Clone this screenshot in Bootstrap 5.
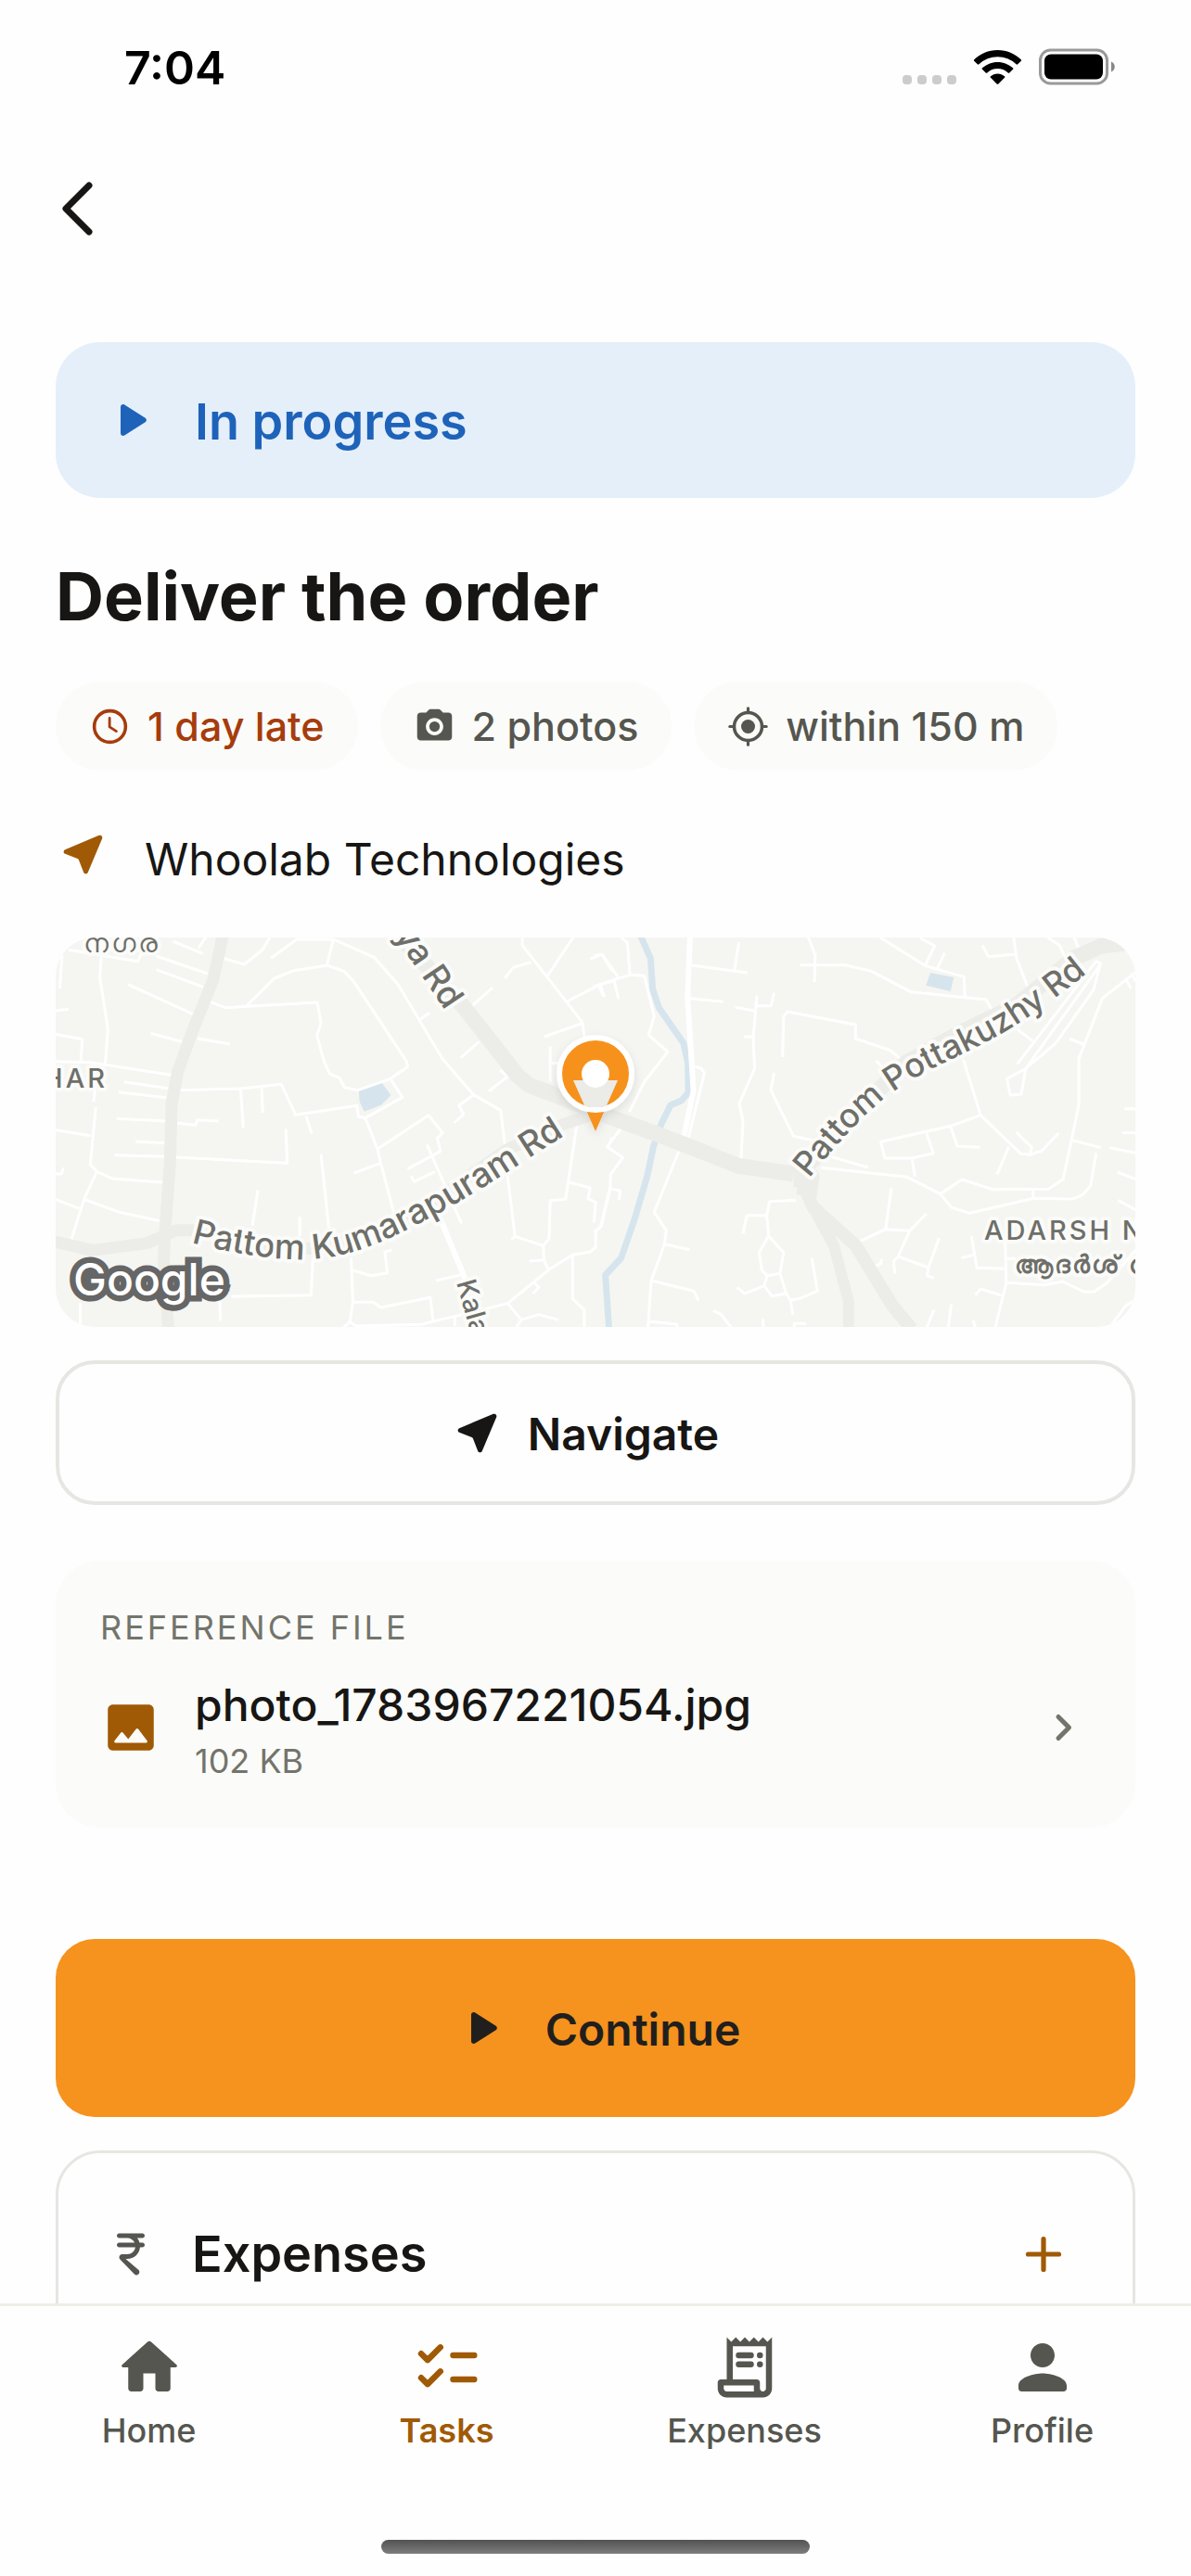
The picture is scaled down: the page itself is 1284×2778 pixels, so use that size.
<!DOCTYPE html>
<html lang="en">
<head>
<meta charset="utf-8">
<meta name="viewport" content="width=device-width, initial-scale=1">
<title>Deliver the order</title>
<link href="https://cdn.jsdelivr.net/npm/bootstrap@5.3.0/dist/css/bootstrap.min.css" rel="stylesheet">
<style>
:root{--ink:#171614;--soft:#55564f;--muted:#73746b;--amber:#a05a05;--orange:#f6921e;--line:#e6e7e2;--panel:#fbfbf9}
body{font-family:Inter,"Noto Sans",sans-serif;color:var(--ink);background:#fefefe}
svg{display:block;flex-shrink:0}
.i45{width:45px;height:45px}.i60{width:60px;height:60px}.i66{width:66px;height:66px}.i78{width:78px;height:78px}
.gap-18{gap:18px}.gap-24{gap:24px}.gap-36{gap:36px}
.status-bar{height:144px;padding:0 82px 0 134px}
.clock{font-size:50px;line-height:60px;padding-top:2px;color:#000}
.app-bar{height:162px;padding:0 46px}
.back-btn{padding:0;color:var(--ink)}
.scroll-area{min-height:0;overflow-y:auto;scrollbar-width:none;padding:63px 60px 0}
.scroll-area::-webkit-scrollbar{display:none}
.icon-label{padding-top:4px}
.banner{height:168px;padding:0 48px;border-radius:48px;background:#e4effa;color:#1e63b9;font-size:54px;line-height:72px}
.page-title{font-size:72px;line-height:90px;margin:61px 0 47px}
.chip{height:96px;padding:0 36px;border-radius:48px;background:var(--panel);color:var(--soft);font-size:43px;line-height:60px}
.chip-late{color:#a63c0c}
.place{margin:60px 0 48px;font-size:48px;line-height:72px}
.text-amber{color:var(--amber)}
.map-box{height:420px;border-radius:42px;background:#f5f6f2}
.map-box text{font-family:Inter,"Noto Sans",sans-serif;font-weight:500;fill:#6e6f69;stroke:#fbfbf9;stroke-width:8px;stroke-linejoin:round;paint-order:stroke}
.map-box path{vector-effect:non-scaling-stroke;fill:none;stroke-linejoin:round}
.lanes{stroke:#fff;stroke-width:3px}
.streets{stroke:#fff;stroke-width:6px}
.avenues{stroke:#ecede9}
.river{stroke:#d6e5ed;stroke-width:7px}
.map-box path.pond{fill:#d6e5ed}
.road-name{font-size:37px}
.road-name-sm{font-size:36px}
.area-name{font-size:29px;letter-spacing:3px}
.map-box text.local-name{font-size:27px;font-weight:600;letter-spacing:2px}
.map-box text.brand{font-size:48px;font-weight:500;fill:#fff;stroke:#666;stroke-width:13px;stroke-linejoin:miter}
.btn-nav{height:156px;margin-top:36px;padding:0 72px 0 48px;border:4px solid var(--line);border-radius:42px;font-size:48px;line-height:60px;color:var(--ink)}
.file-card{margin-top:60px;padding:48px;border-radius:48px;background:var(--panel)}
.eyebrow{font-size:36px;line-height:48px;letter-spacing:3px;margin-bottom:24px;color:var(--muted)}
.file-link{color:var(--ink)}
.file-name{font-size:48px;line-height:72px}
.file-size{font-size:36px;line-height:48px;color:var(--muted)}
.btn-go{height:192px;margin-top:120px;border:0;border-radius:42px;background:var(--orange);color:#211f1d;font-size:48px;line-height:60px}
.expense-card{margin-top:36px;padding:76px 63px 76px 48px;border:3px solid var(--line);border-radius:48px}
.expense-title{font-size:54px;line-height:66px}
.tab-bar{border-top:3px solid #efefea;padding-top:27px}
.tab-link{color:var(--soft);font-size:36px;line-height:46px;gap:6px}
.tab-link.active{color:var(--amber)}
.home-bar{width:36%;height:15px;margin:95px auto 24px;border-radius:8px;background:linear-gradient(#525252,#7d7d7d)}
</style>
</head>
<body>
<div class="d-flex flex-column vh-100">
  <header>
    <div class="status-bar d-flex align-items-center justify-content-between">
      <span class="clock fw-semibold">7:04</span>
      <svg width="230" height="40" viewBox="0 0 230 40" role="img" aria-label="Signal, Wi-Fi, battery">
        <g fill="#ccc"><rect x="1" y="29" width="10" height="10" rx="4"/><rect x="17" y="29" width="10" height="10" rx="4"/><rect x="33" y="29" width="10" height="10" rx="4"/><rect x="49" y="29" width="10" height="10" rx="4"/></g>
        <path d="M103.500 2C93.500 2 85 6 78.200 12.200Q77.500 13 78.200 13.800L81.800 17.300Q82.600 18 83.400 17.300A29 29 0 0 1 123.600 17.300Q124.400 18 125.200 17.300L128.800 13.800Q129.500 13 128.800 12.200C122 6 113.500 2 103.500 2ZM103.500 15C97 15 91.500 17.500 87 21.300Q86.200 22 87 22.800L90.700 26.400Q91.500 27 92.300 26.400A16.500 16.500 0 0 1 114.700 26.400Q115.500 27 116.300 26.400L120 22.800Q120.800 22 120 21.300C115.500 17.500 110 15 103.500 15ZM103.500 27.500C100.500 27.500 98 28.600 96 30.300Q95.200 31 96 31.800L102.600 38.400Q103.500 39.200 104.400 38.400L111 31.800Q111.800 31 111 30.300C109 28.600 106.500 27.500 103.500 27.500Z"/>
        <rect x="149.500" y="2" width="72" height="36" rx="11" fill="none" stroke="#999" stroke-width="3"/>
        <rect x="154" y="6.500" width="63" height="27" rx="7"/>
        <path d="M226 14.500c5 2 5 9 0 11z" fill="#888"/>
      </svg>
    </div>
    <div class="app-bar d-flex align-items-center">
      <button type="button" class="btn back-btn" aria-label="Back">
        <svg width="72" height="72" viewBox="0 0 72 72" fill="none" stroke="currentColor" stroke-width="7" stroke-linecap="round" stroke-linejoin="round"><path d="M49 11 24 36l25 25"/></svg>
      </button>
    </div>
  </header>

  <main class="scroll-area flex-grow-1">
    <div class="banner d-flex align-items-center gap-36 fw-semibold">
      <svg class="i66" viewBox="0 0 24 24" fill="currentColor"><path d="M8 6.820v10.360c0 .79.870 1.270 1.540.84l8.140-5.180c.62-.39.62-1.290 0-1.690L9.540 5.980C8.870 5.550 8 6.030 8 6.820z"/></svg>
      <span class="icon-label">In progress</span>
    </div>

    <h1 class="page-title fw-bold">Deliver the order</h1>

    <div class="d-flex flex-wrap gap-24">
      <span class="chip chip-late d-flex align-items-center gap-18 fw-medium">
        <svg class="i45" viewBox="0 0 24 24" fill="none" stroke="currentColor"><circle cx="12" cy="12" r="9" stroke-width="1.900"/><path d="M11.800 7.200v5l3.900 2.500" stroke-width="1.500" stroke-linecap="round" stroke-linejoin="round"/></svg>
        <span>1 day late</span>
      </span>
      <span class="chip d-flex align-items-center gap-18 fw-medium">
        <svg class="i45" viewBox="0 0 24 24" fill="currentColor"><circle cx="12" cy="12" r="3"/><path d="M9.880 2c-.56 0-1.100.24-1.480.65L7.170 4H4c-1.100 0-2 .9-2 2v12c0 1.100.9 2 2 2h16c1.100 0 2-.9 2-2V6c0-1.100-.9-2-2-2h-3.170l-1.240-1.350c-.37-.41-.91-.65-1.470-.65H9.880zM12 17c-2.760 0-5-2.240-5-5s2.240-5 5-5 5 2.240 5 5-2.240 5-5 5z"/></svg>
        <span>2 photos</span>
      </span>
      <span class="chip d-flex align-items-center gap-18 fw-medium">
        <svg class="i45" viewBox="0 0 24 24"><circle cx="12" cy="12" r="4" fill="currentColor"/><g fill="none" stroke="currentColor" stroke-linecap="round"><circle cx="12" cy="12" r="8" stroke-width="1.900"/><path d="M12 1.500v2.500M12 20v2.500M1.500 12H4M20 12h2.500" stroke-width="1.700"/></g></svg>
        <span>within 150 m</span>
      </span>
    </div>

    <div class="place d-flex align-items-start gap-36">
      <svg class="i60 text-amber" viewBox="0 0 24 24" fill="currentColor"><path d="M18.750 3.940L4.070 10.080c-.83.35-.81 1.530.02 1.850L9.430 14c.26.1.47.31.57.57l2.060 5.330c.32.84 1.510.86 1.860.03l6.150-14.670c.33-.83-.5-1.660-1.320-1.320z"/></svg>
      <span>Whoolab Technologies</span>
    </div>

    <div class="map-box overflow-hidden">
      <svg width="100%" height="100%" viewBox="0 0 1164 420" preserveAspectRatio="xMidYMid slice" role="img" aria-label="Map of the delivery place">
        <defs>
          <path id="kumarapuram" d="M146 329C182 339 232 348 272 347C325 345 368 321 412 298C455 275 500 244 570 200"/>
          <path id="pottakuzhy" d="M812 260C840 226 864 197 897 171C927 148 957 136 987 121C1042 94 1072 71 1137 18"/>
          <filter id="pinShade" x="-50%" y="-50%" width="200%" height="200%"><feDropShadow dx="0" dy="4" stdDeviation="5" flood-opacity=".1"/></filter>
        </defs>
        <!-- west half -->
        <g transform="translate(-20 -21) scale(.39541 .33333)">
          <path class="pond" d="M877 557L940 534L965 573L938 605L892 626L879 594Z"/>
          <g class="lanes">
            <path d="M85 103L275 140L290 100M68 120L62 228M175 125L171 190L193 360L186 470M50 300L86 295M50 376L123 392L119 466M50 464L145 467L365 508M237 530L358 551M222 563L352 581M158 555L154 595M160 612L145 798L163 820L205 843L345 856M50 686L147 704M217 649L350 657M268 723L350 728M211 767L350 772M72 808L66 828L50 828M163 820L128 910L92 1045M50 910L115 940M128 910L225 952L335 980"/>
            <path d="M370 75L452 115M460 62L440 97M325 123L465 180M325 167L453 223M248 215L427 312M310 373L395 400M438 390L526 408M507 130L565 150L613 105L635 62M638 130L708 69H808L920 128L985 217L1105 455L1190 572L1264 622L1276 740"/>
            <path d="M808 69L790 153L700 170L647 195L568 288M790 153L838 173L863 205L1008 465L1010 482L963 520L875 557L838 548L824 517L798 504L783 466L763 380L774 340L764 273L513 290L473 272M963 520L996 580L895 647L876 642L872 607L705 637L666 538L555 552L388 557M555 552L562 678M612 546L615 630M376 663L432 670L437 653L495 657M678 682L682 793L378 774M733 640L749 698M774 764L796 1010M602 880L587 995M716 965V1030M895 647L928 748L937 793L974 960M928 748L1067 638L1106 695L1091 712L1100 754L1010 812M937 793L864 825M1020 835L1028 853L1085 820M1063 733L1157 988"/>
            <path d="M1276 770L1303 1030L1380 1060L1396 1037L1399 914L1441 910L1472 665M1303 1030L1293 1040M1380 1060L1382 1108L1395 1138M1342 1110L1382 1106M856 1100L861 1240L853 1307L835 1325M853 1307L870 1320L1047 1315L1283 1247L1395 1138L1460 1090L1508 1080L1523 1065V1015L1537 997L1562 870M861 1140L910 1157L955 1148L948 1080L967 1075M1087 1173L1165 1152M863 1243H916L937 1260L1072 1228L1080 1305M1139 1290V1320M1283 1247L1320 1300L1307 1325M1320 1300L1367 1283L1422 1300M1460 1090V1232L1492 1268V1325M1355 1180L1368 1195L1352 1215M530 1224L747 1220L752 1100M498 1240L500 1303M118 1245V1318"/>
            <path d="M1042 330L1070 306M1180 290L1242 225M1155 452L1205 400M1232 560L1283 513L1262 492M1190 572L1150 607L1163 635L1137 663M1323 62V88L1487 338L1492 385M1347 143L1298 160L1275 195M1390 190L1462 62M1445 270L1535 215L1568 205M1535 215L1547 255M1508 132L1540 118L1568 170M1487 340L1383 384M1399 415V530M1399 470H1425M1451 855L1508 873L1502 908L1523 920L1518 985M1568 710L1556 742"/>
          </g>
          <path class="streets" d="M1100 975L1168 1170"/>
          <g class="avenues">
            <path stroke-width="13" d="M507 55L480 200L422 370L383 500L367 600L362 800L352 960L345 1100L350 1200L358 1330"/>
            <path stroke-width="13" d="M40 1045L150 1075L300 1052L380 1010L430 1010L560 1045L740 1070L900 1030L1100 900L1280 750L1440 665L1530 630"/>
            <path stroke-width="17" d="M985 55L1165 290L1310 510L1340 540L1440 585L1530 630"/>
          </g>
        </g>
        <!-- east half -->
        <g transform="translate(580 -21) scale(.39541 .33333)">
          <path class="pond" d="M918 177L982 192L973 237L906 218Z"/>
          <path class="river" d="M127 55L155 130L161 230L178 290L245 405L257 470L258 565L240 590L210 605L185 665L163 740L145 840L110 980L75 1100L32 1155L42 1330"/>
          <g class="lanes">
            <path d="M75 62L92 80L99 184M0 222L55 200L99 184L138 187L165 318L150 378L202 433L138 530L97 628M12 215L28 255M55 200L68 262M0 122L24 118L66 190M78 675L37 740L79 775L46 830L45 875L73 883L69 912M45 875L20 1000L0 1015M232 755L165 952L198 1010L193 1055L157 1173L148 1325M193 1055L262 1073M157 1173L273 1207L286 1238M148 1305L227 1314V1325M268 153L419 177M384 168L396 78M263 260L353 271M386 289L437 300M445 252L435 390L439 487L397 600L407 655L402 780M445 284H484L492 242M410 384H435M275 480L293 486L302 502L258 712"/>
            <path d="M515 450L518 320L528 303L714 345V390L808 428L838 457M492 500L483 557L545 706L600 720M563 152H685L757 172L865 239L1070 264L1092 310M585 62L604 120L602 207M780 62L905 155L1010 190L1012 255M890 65L930 90L905 150M957 113L937 163M1060 88L1076 125L1150 117M1145 62L1153 130L1184 225M1237 62L1270 88L1285 125M1310 62L1322 98M1008 458L1055 638L973 673L783 724L794 777H868L926 761L908 697M868 777L876 836M973 673L991 738L1053 742M1055 638L1165 763L1190 766L1222 753L1268 695M1152 693L1194 741L1190 766M1132 740L1100 829"/>
            <path d="M770 462L785 480M640 770L748 807M620 808L855 838L945 893L1004 846L1088 878L1240 877L1280 845L1303 718L1323 605V455L1387 260L1478 175M945 893L975 936L1025 955L1200 907L1307 909L1334 895L1355 867L1370 760M1198 880V907M1303 718L1383 743M1407 743L1478 760M1297 390L1334 408M1155 472L1370 140L1382 147L1363 232L1260 405L1178 487L1127 520L1136 573L1166 570L1178 487L1382 150M1155 360L1197 398M1450 195L1465 227M1478 617H1447M1478 695H1441M1428 822L1478 845M1430 913L1478 945M1465 180L1478 205"/>
            <path d="M552 913L480 917L472 962L477 1028L518 1082L508 1150L525 1215L537 1237L543 1284M472 962H418L407 1022M477 1028L451 1082L459 1140L473 1157L508 1150M473 1157L465 1190L412 1215L391 1195M465 1190L486 1223L525 1215M595 1100L610 1207L565 1230L537 1237M812 872L796 1007L727 1045M796 1007L862 1012L907 956M862 1012L830 1095L913 1131L942 1035M830 1095L818 1110L821 1150M913 1131L909 1157L928 1165M785 1103L783 1118L765 1128M1030 1030L1045 1132L1122 1135M1003 1100L1035 1090M1122 1045L1125 1180L1095 1325M1125 1180L1230 1187L1278 1176L1337 1209H1365L1400 1180L1478 1075M1125 1102H1150M1041 1220L1055 1200L1115 1222M326 1270L347 1282L375 1325M461 1297L463 1325M547 1325V1312H580M975 1250L967 1325M928 1268L908 1325M1035 1302L1041 1325M1478 1235L1450 1255L1410 1320"/>
          </g>
          <path class="streets" d="M263 55L256 260L268 480L272 560L245 712"/>
          <g class="avenues">
            <path stroke-width="17" d="M-77 585L13 630L180 702L395 802L545 828"/>
            <path stroke-width="17" d="M550 830L600 780L720 625L850 470L1000 370L1150 285L1310 130L1385 90L1490 75"/>
            <path stroke-width="22" d="M545 838L588 838L580 900"/>
            <path stroke-width="12" d="M565 850L600 940L655 1060L695 1240V1330"/>
            <path stroke-width="14" d="M575 870L598 935L715 1060L815 1255L868 1330"/>
          </g>
        </g>
        <text class="area-name" x="30" y="16">നഗര</text>
        <text class="area-name" x="56" y="162" text-anchor="end">HAR</text>
        <text class="area-name" x="1001" y="326">ADARSH N</text>
        <text class="area-name local-name" x="1034" y="362">ആദർശ് ന</text>
        <text class="road-name" transform="translate(420 79) rotate(56)" text-anchor="end">ya Rd</text>
        <text class="road-name"><textPath href="#kumarapuram">Pattom Kumarapuram Rd</textPath></text>
        <text class="road-name-sm"><textPath href="#pottakuzhy">Pattom Pottakuzhy Rd</textPath></text>
        <text font-size="29" transform="translate(432 372) rotate(74)">Kala</text>
        <text class="brand" x="19" y="386">Google</text>
        <g filter="url(#pinShade)">
          <polygon points="558,154 606,154 582,209" fill="#f6921e"/>
          <circle cx="582" cy="147" r="39" fill="#f6921e" stroke="#fff" stroke-width="6"/>
        </g>
        <polygon points="558,154 606,154 594,181 588,183 576,183 570,181" fill="#ebebe8"/>
        <circle cx="582" cy="147" r="15" fill="#fff"/>
      </svg>
    </div>

    <button type="button" class="btn btn-nav w-100 d-flex align-items-center justify-content-center gap-24 fw-semibold">
      <svg class="i60" viewBox="0 0 24 24" fill="currentColor"><path d="M18.750 3.940L4.070 10.080c-.83.35-.81 1.530.02 1.850L9.430 14c.26.1.47.31.57.57l2.060 5.330c.32.84 1.510.86 1.860.03l6.150-14.670c.33-.83-.5-1.660-1.320-1.320z"/></svg>
      <span class="icon-label">Navigate</span>
    </button>

    <section class="file-card">
      <div class="eyebrow text-uppercase">Reference file</div>
      <a href="#" class="file-link d-flex align-items-center gap-36 text-decoration-none">
        <svg class="i66 text-amber" viewBox="0 0 24 24" fill="currentColor"><path d="M21 19V5c0-1.100-.9-2-2-2H5c-1.100 0-2 .9-2 2v14c0 1.100.9 2 2 2h14c1.100 0 2-.9 2-2zM8.900 13.980l2.100 2.530 3.100-3.990c.2-.26.6-.26.8.01l3.510 4.680c.25.33.01.8-.4.8H6.020c-.42 0-.65-.48-.39-.81L8.120 14c.19-.26.57-.27.78-.02z"/></svg>
        <span class="flex-grow-1 d-flex flex-column">
          <span class="file-name fw-medium">photo_1783967221054.jpg</span>
          <span class="file-size">102 KB</span>
        </span>
        <svg class="i60" viewBox="0 0 24 24" fill="none" stroke="#73746b" stroke-width="2" stroke-linecap="round" stroke-linejoin="round"><path d="M10 7.400l4.600 4.600-4.600 4.600"/></svg>
      </a>
    </section>

    <button type="button" class="btn btn-go w-100 d-flex align-items-center justify-content-center gap-36 fw-semibold">
      <svg class="i66" viewBox="0 0 24 24" fill="currentColor"><path d="M8 6.820v10.360c0 .79.870 1.270 1.540.84l8.140-5.180c.62-.39.62-1.290 0-1.690L9.540 5.980C8.870 5.550 8 6.030 8 6.820z"/></svg>
      <span class="icon-label">Continue</span>
    </button>

    <section class="expense-card d-flex align-items-center gap-36">
      <svg class="i60" viewBox="0 0 24 24" fill="#55564f"><path d="M17 5c.55 0 1-.45 1-1s-.45-1-1-1H7c-.55 0-1 .45-1 1s.45 1 1 1h3.500c1.400 0 2.600.82 3.160 2H7c-.55 0-1 .45-1 1s.45 1 1 1h6.960c-.24 1.700-1.700 3-3.460 3H8.270C7.570 12 7 12.570 7 13.270c0 .33.13.64.35.88l6.200 6.450c.24.25.57.4.92.4 1.120 0 1.700-1.350.920-2.160L9.770 14h.73c2.870 0 5.230-2.200 5.480-5H17c.55 0 1-.45 1-1s-.45-1-1-1h-1.210c-.21-.74-.57-1.420-1.050-2z"/></svg>
      <h2 class="expense-title fw-semibold m-0 flex-grow-1">Expenses</h2>
      <button type="button" class="btn p-0 border-0 text-amber" aria-label="Add expense">
        <svg class="i66" viewBox="0 0 24 24" fill="none" stroke="currentColor" stroke-width="1.900" stroke-linecap="round"><path d="M12 6v12M6 12h12"/></svg>
      </button>
    </section>
  </main>

  <footer>
    <nav class="tab-bar row g-0" aria-label="Main">
      <a href="#" class="tab-link col d-flex flex-column align-items-center text-decoration-none fw-medium">
        <svg class="i78" viewBox="0 0 24 24" fill="currentColor"><path d="M10 19v-5h4v5c0 .55.45 1 1 1h3c.55 0 1-.45 1-1v-7h1.700c.46 0 .68-.57.33-.87L12.670 3.600c-.38-.34-.96-.34-1.340 0l-8.360 7.530c-.34.3-.13.87.33.87H5v7c0 .55.45 1 1 1h3c.55 0 1-.45 1-1z"/></svg>
        <span>Home</span>
      </a>
      <a href="#" class="tab-link active col d-flex flex-column align-items-center text-decoration-none fw-semibold" aria-current="page">
        <svg class="i78" viewBox="0 0 24 24" fill="none" stroke="currentColor" stroke-width="2" stroke-linecap="round" stroke-linejoin="round"><path d="M14 8h7M14 16h7M3.400 7.450l2.130 2.130 4.240-4.250M3.400 15.450l2.130 2.130 4.240-4.250"/></svg>
        <span>Tasks</span>
      </a>
      <a href="#" class="tab-link col d-flex flex-column align-items-center text-decoration-none fw-medium">
        <svg class="i78" viewBox="0 0 24 24" fill="currentColor"><path d="M19.500 3.500L18 2l-1.500 1.500L15 2l-1.500 1.500L12 2l-1.500 1.500L9 2 7.500 3.500 6 2v14H4c-.55 0-1 .45-1 1v2c0 1.660 1.340 3 3 3h12c1.660 0 3-1.340 3-3V2l-1.500 1.500zM15 20H6c-.55 0-1-.45-1-1v-1h10v2zm4-1c0 .55-.45 1-1 1s-1-.45-1-1v-2c0-.55-.45-1-1-1H8V5h11v14z"/><path d="M10 8h4M10 11h4M17 8h.01M17 11h.01" stroke="currentColor" stroke-width="2" stroke-linecap="round"/></svg>
        <span>Expenses</span>
      </a>
      <a href="#" class="tab-link col d-flex flex-column align-items-center text-decoration-none fw-medium">
        <svg class="i78" viewBox="0 0 24 24" fill="currentColor"><path d="M12 12c2.210 0 4-1.790 4-4s-1.790-4-4-4-4 1.790-4 4 1.790 4 4 4zm0 2c-2.670 0-8 1.340-8 4v1c0 .55.45 1 1 1h14c.55 0 1-.45 1-1v-1c0-2.660-5.330-4-8-4z"/></svg>
        <span>Profile</span>
      </a>
    </nav>
    <div class="home-bar"></div>
  </footer>
</div>
<script src="https://cdn.jsdelivr.net/npm/bootstrap@5.3.0/dist/js/bootstrap.bundle.min.js"></script>
</body>
</html>
